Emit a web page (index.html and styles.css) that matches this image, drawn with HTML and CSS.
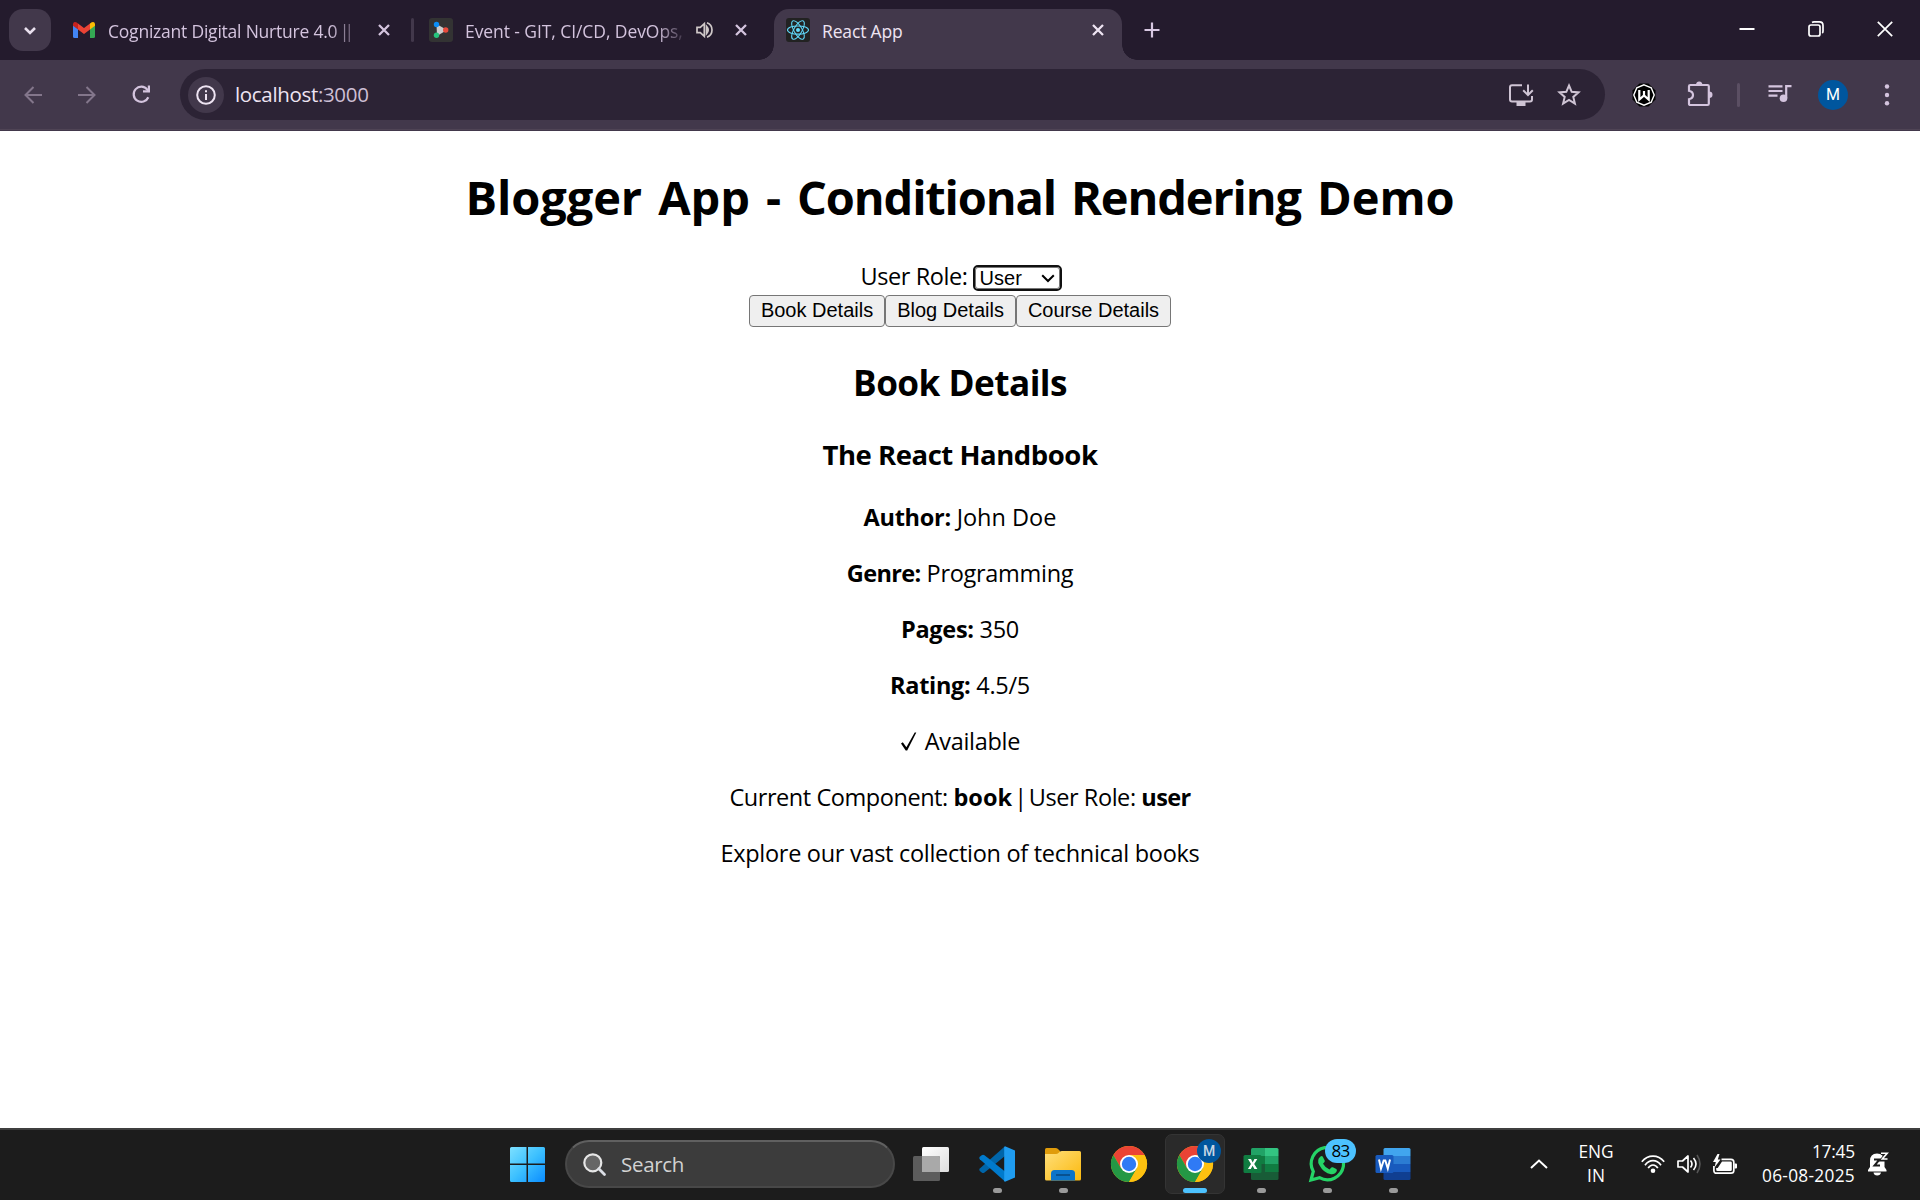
FILE: index.html
```html
<!DOCTYPE html>
<html lang="en">
<head>
<meta charset="utf-8">
<title>React App</title>
<link rel="stylesheet" href="styles.css">
</head>
<body>
<header class="tabstrip">
  <button class="tab-search" aria-label="Search tabs"><svg width="14" height="9" viewBox="0 0 14 9"><path d="M2 2l5 5 5-5" fill="none" stroke="#e9e0ee" stroke-width="2.6"/></svg></button>
  <div class="tab tab-mail">
    <svg class="fav-mail" width="22" height="16" viewBox="0 0 22 16"><path d="M0 2v12.500Q0 16 1.500 16H5V6z" fill="#4285f4"/><path d="M17 6v10h3.500Q22 16 22 14.500V2z" fill="#34a853"/><path d="M17 1.500V7.500L22 3.700V2Q21.500-1 18.700.3z" fill="#fbbc04"/><path d="M5 1.500v6l6 4.500 6-4.500v-6L11 6z" fill="#ea4335"/><path d="M0 2v1.700L5 7.500v-6L3.300.3Q.5-1 0 2z" fill="#c5221f"/></svg>
    <span class="tab-title fade">Cognizant Digital Nurture 4.0 <span class="bars">||</span></span>
    <svg class="close" width="14" height="14" viewBox="0 0 14 14"><path d="M2 2l10 10M12 2L2 12" stroke="#d4c4de" stroke-width="2.300"/></svg>
  </div>
  <i class="tab-sep"></i>
  <div class="tab tab-event">
    <svg width="24" height="24" viewBox="0 0 24 24"><rect width="24" height="24" rx="3" fill="#333"/><path d="M7.500 6L18 12 8 18z" fill="#ccc"/><circle cx="7.500" cy="6.500" r="2.700" fill="#0a8df5"/><circle cx="16.700" cy="12" r="2.700" fill="#e84a3c"/><circle cx="7.500" cy="17.300" r="2.700" fill="#25c37c"/></svg>
    <span class="tab-title fade">Event - GIT, CI/CD, DevOps,</span>
    <svg class="audio" width="18" height="18" viewBox="0 0 18 18"><path d="M1 6.300h3.300L8.300 2.600v12.800l-4-3.700H1z" fill="none" stroke="#cfc8c8" stroke-width="1.700"/><path d="M10.500 5.300q3.300 3.700 0 7.400zM11 1.800q5 1.900 5 7.200t-5 7.200" fill="none" stroke="#cfc8c8" stroke-width="1.700"/></svg>
    <svg class="close" width="14" height="14" viewBox="0 0 14 14"><path d="M2 2l10 10M12 2L2 12" stroke="#d4c4de" stroke-width="2.300"/></svg>
  </div>
  <div class="tab tab-active">
    <svg width="24" height="24" viewBox="0 0 24 24"><rect width="24" height="24" rx="3" fill="#222"/><g fill="none" stroke="#61dafb" stroke-width="1.050"><ellipse cx="12" cy="12" rx="10.500" ry="4.100"/><ellipse cx="12" cy="12" rx="10.500" ry="4.100" transform="rotate(60 12 12)"/><ellipse cx="12" cy="12" rx="10.500" ry="4.100" transform="rotate(120 12 12)"/></g><circle cx="12" cy="12" r="2" fill="#61dafb"/></svg>
    <span class="tab-title">React App</span>
    <svg class="close" width="14" height="14" viewBox="0 0 14 14"><path d="M2 2l10 10M12 2L2 12" stroke="#eee4f2" stroke-width="2.300"/></svg>
  </div>
  <svg class="new-tab" width="16" height="16" viewBox="0 0 16 16"><path d="M8 .5v15M.5 8h15" stroke="#d8c8e2" stroke-width="2.200"/></svg>
  <div class="win-controls">
    <svg width="16" height="16" viewBox="0 0 16 16"><path d="M.5 8h15" stroke="#fff" stroke-width="2"/></svg>
    <svg width="16" height="16" viewBox="0 0 16 16"><rect x="1" y="4" width="11" height="11" rx="2" fill="none" stroke="#fff" stroke-width="1.700"/><path d="M4 1.500Q5 .9 6 .9h5.500Q15 .9 15 4.500V10q0 1.500-.8 2" fill="none" stroke="#fff" stroke-width="1.700"/></svg>
    <svg width="16" height="16" viewBox="0 0 16 16"><path d="M.8.8l14.400 14.400M15.200.8L.8 15.200" stroke="#fff" stroke-width="1.700"/></svg>
  </div>
</header>
<nav class="toolbar">
  <svg class="back" width="18" height="18" viewBox="0 0 18 18"><path d="M18 9H1.500M9.500 1L1.500 9l8 8" fill="none" stroke="#83768b" stroke-width="2"/></svg>
  <svg class="fwd" width="18" height="18" viewBox="0 0 18 18"><path d="M0 9h16.500M8.500 1l8 8-8 8" fill="none" stroke="#83768b" stroke-width="2"/></svg>
  <svg class="reload" width="19" height="19" viewBox="0 0 19 19"><path d="M16.300 12.200A7.600 7.600 0 1 1 15.300 4.600L17 6.500" fill="none" stroke="#d4c4de" stroke-width="2.200"/><path d="M18 .5v7h-7V5.300h4.800V.5z" fill="#d4c4de"/></svg>
  <div class="omnibox">
    <span class="info"><svg width="20" height="20" viewBox="0 0 20 20"><circle cx="10" cy="10" r="8.800" fill="none" stroke="#eee4f2" stroke-width="2"/><path d="M10 9v6M10 5.200v2" stroke="#eee4f2" stroke-width="2"/></svg></span>
    <span class="url">localhost<span class="port">:3000</span></span>
    <svg class="install" width="24" height="22" viewBox="0 0 24 22"><path d="M13 1.200H3Q1 1.200 1 3.200v12.300q0 2 2 2h18q2 0 2-2V12" fill="none" stroke="#cfc4d4" stroke-width="2"/><path d="M7.500 17.500h9V22h-9z" fill="#cfc4d4"/><path d="M19 .5v10M14.200 6.300L19 11l4.800-4.700" fill="none" stroke="#cfc4d4" stroke-width="2"/></svg>
    <svg class="star" width="24" height="23" viewBox="0 0 24 23"><path d="M12 2.500l2.700 6.300 6.800.6-5.200 4.500 1.600 6.700-5.900-3.600-5.900 3.600 1.600-6.700-5.200-4.500 6.800-.6z" fill="none" stroke="#cfc4d4" stroke-width="2"/></svg>
  </div>
  <svg class="ext" width="24" height="24" viewBox="0 0 24 24"><path d="M7.500 .5h9L23.500 7.500v9L16.500 23.500h-9L.5 16.500v-9z" fill="#000"/><path d="M12 1.800l7.200 3 3 7.200-3 7.200-7.200 3-7.200-3-3-7.200 3-7.200z" fill="#000" stroke="#fff" stroke-width="1.400"/><path d="M7.300 7v9.500L12 12.500l4.700 4V7M12 8v5" fill="none" stroke="#fff" stroke-width="2.200"/></svg>
  <svg class="puzzle" width="26" height="26" viewBox="0 0 26 26"><path d="M3.300 4h17.200q1.300 0 1.300 1.300v17.400q0 1.300-1.300 1.300H3.300Q2 24 2 22.700v-4.500Q6 17.300 6 14t-4-4.200V5.300Q2 4 3.300 4z" fill="none" stroke="#d4c4de" stroke-width="2.200"/><path d="M9 4q0-3.500 3.200-3.500T15.400 4zM22 10.500q3.500 0 3.500 3.300T22 17.100z" fill="#d4c4de"/></svg>
  <i class="bar-sep"></i>
  <svg class="queue" width="24" height="18" viewBox="0 0 24 18"><path d="M.5 1.300h14M.5 6h14M.5 10.700h9" stroke="#d4c4de" stroke-width="2.200"/><circle cx="15.500" cy="13.200" r="3.800" fill="#d4c4de"/><path d="M18.200 13V1.200H23.500" fill="none" stroke="#d4c4de" stroke-width="2.200"/></svg>
  <span class="avatar">M</span>
  <svg class="menu" width="6" height="22" viewBox="0 0 6 22"><g fill="#d4c4de"><circle cx="3" cy="2.500" r="2.200"/><circle cx="3" cy="11" r="2.200"/><circle cx="3" cy="19.300" r="2.200"/></g></svg>
</nav>
<main class="app">
  <h1>Blogger App - <span class="h1-mid">Conditional Rendering</span> Demo</h1>
  <div class="role"><span class="role-label">User Role:</span><div class="select-box"><select><option>User</option><option>Admin</option></select><svg class="arrow" width="14" height="9" viewBox="0 0 14 9"><path d="M1.200 1.200L7 7l5.800-5.800" fill="none" stroke="#000" stroke-width="2"/></svg></div></div>
  <div class="switcher"><button>Book Details</button><button>Blog Details</button><button>Course Details</button></div>
  <h2>Book Details</h2>
  <h3>The React Handbook</h3>
  <p><strong>Author:</strong> <span class="loose">John Doe</span></p>
  <p><strong class="tight">Genre:</strong> Programming</p>
  <p><strong>Pages:</strong> 350</p>
  <p><strong>Rating:</strong> 4.5/5</p>
  <p><svg class="check" width="17" height="19" viewBox="0 0 17 19"><path d="M1 11.500l1.800-1.200 3.600 5L14.700.5h1.600L7.200 18.500H5.700z" fill="#000"/></svg> Available</p>
  <p class="status">Current Component: <strong class="loose">book</strong> <span class="pipe">|</span> User Role: <strong class="tight">user</strong></p>
  <p>Explore our vast collection of technical books</p>
</main>
<footer class="taskbar">
  <svg class="start" width="35" height="35" viewBox="0 0 35 35"><defs><linearGradient id="win" x1="0" y1="0" x2="35" y2="35" gradientUnits="userSpaceOnUse"><stop stop-color="#7de0ff"/><stop offset=".5" stop-color="#3cc0ff"/><stop offset="1" stop-color="#0a8cff"/></linearGradient></defs><path d="M1.500 0H16.500V16.500H0V1.500Q0 0 1.500 0zM18 0h15.500Q35 0 35 1.500v15H18zM0 18h16.500v17h-15Q0 35 0 33.500zM18 18h17v15.500q0 1.500-1.500 1.500H18z" fill="url(#win)"/></svg>
  <div class="search"><svg width="23" height="23" viewBox="0 0 23 23"><circle cx="9.800" cy="9.800" r="8.500" fill="#666" stroke="#e6e6e6" stroke-width="2.200"/><path d="M15.800 15.800l5.700 5.700" stroke="#dcdfe6" stroke-width="2.800" stroke-linecap="round"/></svg><span>Search</span></div>
  <div class="apps">
    <div class="slot"><svg width="36" height="36" viewBox="0 0 36 36"><defs><linearGradient id="tv" x1="0" y1="0" x2="1" y2="1"><stop stop-color="#fff"/><stop offset="1" stop-color="#ddd"/></linearGradient></defs><rect x="9" y="1" width="27" height="25" rx="1.500" fill="url(#tv)"/><rect y="10" width="27" height="25" rx="1.500" fill="#5c5c5c"/><path d="M9 10h16.500q1.500 0 1.500 1.500V26H9z" fill="#a9a9a9"/></svg></div>
    <div class="slot run"><svg width="36" height="36" viewBox="0 0 36 36"><path d="M.8 22.500L26 .3V10L5.500 26.500q-1.500 1-2.800 0L.8 25q-1.200-1.200 0-2.500z" fill="#0065a9"/><path d="M.8 13.200Q-.4 12 .8 10.700L2.700 9.200q1.300-1 2.800 0L26 25.500v10z" fill="#007acc"/><path d="M26 .3L36 4.500v27L26 35.800q-1.500-.3-.8-2.500V3q-.5-2.300.8-2.700z" fill="#1f9cf0"/></svg></div>
    <div class="slot run"><svg width="36" height="36" viewBox="0 0 36 36"><defs><linearGradient id="fo" x1="0" y1="0" x2="1" y2="1"><stop stop-color="#ffdf7a"/><stop offset="1" stop-color="#fbb90e"/></linearGradient></defs><path d="M0 3.500Q0 2 1.500 2h9q1.500 0 2.500 1l2 2v5H0z" fill="#e09c0b"/><path d="M0 8h11q1.500 0 2.500-1l1-1q1-1 2.500-1h17.500Q36 5 36 6.500V33q0 1.500-1.500 1.500h-33Q0 34.500 0 33z" fill="url(#fo)"/><path d="M6 34.500V27.500Q6 24 9.500 24h17Q30 24 30 27.500v7z" fill="#0c74c9"/><path d="M11 29h14" stroke="#084d8a" stroke-width="1.800"/></svg></div>
    <div class="slot"><svg width="36" height="36" viewBox="0 0 36 36"><g id="chrome"><circle cx="18" cy="18" r="18" fill="#fbbc04"/><path d="M18 9H33.590A18 18 0 0 0 2.410 9L10.200 22.500z" fill="#ea4335"/><path d="M2.410 9A18 18 0 0 0 18 36L25.800 22.500 18 18 10.200 22.500z" fill="#249845"/><path d="M18 9H33.590A18 18 0 0 1 18 36L25.800 22.500z" fill="#fdc110"/><circle cx="18" cy="18" r="9" fill="#fff"/><circle cx="18" cy="18" r="7.200" fill="#2f7af5"/></g></svg></div>
    <div class="slot current"><svg width="36" height="36" viewBox="0 0 36 36"><use href="#chrome"/></svg><span class="badge-m">M</span></div>
    <div class="slot run"><svg width="36" height="36" viewBox="0 0 36 36"><path d="M8 3.500Q8 2 9.500 2H22v8H8z" fill="#21a366"/><path d="M22 2h12Q35.500 2 35.500 3.500V10H22z" fill="#33c481"/><path d="M8 10h14v8H8z" fill="#107c41"/><path d="M22 10h13.500v8H22z" fill="#21a366"/><path d="M8 18h27.500v14.500q0 1.500-1.500 1.500H9.500Q8 34 8 32.500z" fill="#185c37"/><path d="M22 18h13.500v8H22z" fill="#107c41"/><rect x=".5" y="9" width="18" height="18" rx="1.500" fill="#107c41"/><path d="M5 13h3l1.700 3.400L11.400 13h2.900L11.200 18l3.200 5h-3l-1.800-3.300L7.800 23H4.900L8 18z" fill="#fff"/></svg></div>
    <div class="slot run"><svg width="36" height="36" viewBox="0 0 36 36"><path d="M2 34l2.300-8.500A16.200 16.200 0 1 1 10.500 31.700z" fill="none" stroke="#25d366" stroke-width="3.200"/><path d="M11.500 10.500q1-1 2.200 0l2 4q.3 1-.4 1.800l-1.300 1.500q2.300 4 6.500 5.800l1.800-2q.7-.7 1.500-.3l3.500 1.800q1 .7.4 2.200-1.700 3.400-5.700 3Q14.500 27 10.300 19q-3-5 1.200-8.500z" fill="#25d366"/></svg><span class="badge-n">83</span></div>
    <div class="slot run"><svg width="36" height="36" viewBox="0 0 36 36"><path d="M8.500 10V3.500Q8.500 2 10 2h24q1.500 0 1.500 1.500V10z" fill="#41a5ee"/><path d="M8.500 10h27v8h-27z" fill="#2b7cd3"/><path d="M8.500 18h27v8h-27z" fill="#185abd"/><path d="M8.500 26h27v6.500Q35.500 34 34 34H10q-1.500 0-1.500-1.500z" fill="#103f91"/><rect x=".5" y="9" width="18" height="18" rx="1.500" fill="#185abd"/><path d="M4 13.500l2 9 2.700-8h1.600l2.500 8 2.200-9" fill="none" stroke="#fff" stroke-width="2"/></svg></div>
  </div>
  <div class="tray">
    <svg class="chev" width="18" height="10" viewBox="0 0 18 10"><path d="M1 9l8-7.500L17 9" fill="none" stroke="#fff" stroke-width="2"/></svg>
    <div class="lang"><span>ENG</span><span>IN</span></div>
    <svg class="wifi" width="24" height="18" viewBox="0 0 24 18"><g fill="none" stroke="#fff" stroke-width="1.700"><path d="M.8 6.800Q5.500 1.200 12 1.200t11.200 5.600M4 10.200Q7.300 5.700 12 5.700t8 4.500M7.200 13.200Q9 10 12 10t4.800 3.200"/></g><circle cx="12" cy="15.700" r="2.300" fill="#fff"/></svg>
    <svg class="vol" width="24" height="20" viewBox="0 0 24 20"><path d="M1 7h4.500L11 2v16l-5.500-5H1z" fill="none" stroke="#fff" stroke-width="1.700" stroke-linejoin="round"/><path d="M13.500 6.500q3 3.500 0 7M16.500 4q5 6 0 12" fill="none" stroke="#fff" stroke-width="1.600"/><path d="M20 1q6 9 0 18" fill="none" stroke="#555" stroke-width="1.600"/></svg>
    <svg class="batt" width="24" height="21" viewBox="0 0 24 21"><path d="M8.500 5.300h9.500q2.800 0 2.800 2.700v8.500q0 2.700-2.800 2.700H3.700Q.9 19.200.9 16.500V12" fill="none" stroke="#fff" stroke-width="1.700"/><path d="M9 7.500h8.500q1.300 0 1.300 1.200v7q0 1.300-1.300 1.300h-13q-1.300 0-1.300-1.300V14h1.500zM21.500 9.500H23q1 0 1 1v3q0 1-1 1h-1.500zM4.500 0L0 8h2.800L1.500 13.500 7.500 5.500H4.800L6.500 0z" fill="#fff"/></svg>
    <div class="clock"><span class="time">17:45</span><span class="date">06-08-2025</span></div>
    <svg class="bell" width="22" height="24" viewBox="0 0 22 24"><path d="M1 19.500v-1.500l2-3V9q0-7.500 7-7.500T17.500 9v6l2 3v1.500zM6.500 20.500h7.500q-.5 3-3.800 3t-3.700-3z" fill="#fff"/><path d="M14 1h6.500l-5 6.500H21" fill="none" stroke="#1c1c1c" stroke-width="4"/><path d="M14 1.200h6.200l-5 5.800h5.300" fill="none" stroke="#fff" stroke-width="1.600"/><path d="M7 7.500h5.500L7.500 13.500h5.500" fill="none" stroke="#1c1c1c" stroke-width="2"/></svg>
  </div>
</footer>
</body>
</html>
```
FILE: styles.css
```css
* { box-sizing: border-box; }
body { margin: 0; width: 1920px; height: 1200px; overflow: hidden; display: flex; flex-direction: column; background: #fff; font-family: "Open Sans", "Noto Sans", sans-serif; }
svg { display: block; flex: none; overflow: visible; }
i { flex: none; }

.tabstrip { height: 60px; flex: none; display: flex; align-items: flex-start; background: #241b2d; color: #d4c4de; font-size: 17.500px; }
.tab-search { width: 42px; height: 42px; margin: 9px 12px 0 9px; padding: 0; border: 0; border-radius: 14px; background: #42384b; display: grid; place-items: center; }
.tab { display: flex; align-items: center; height: 42px; margin-top: 9px; }
.tab-title { white-space: nowrap; line-height: 26px; padding-top: 2px; letter-spacing: -.150px; }
.tab-mail { width: 348px; padding-left: 10px; }
.tab-mail .tab-title { width: 254px; margin: 0 15px 0 13px; letter-spacing: -.220px; }
.tab-mail .bars { letter-spacing: -4.800px; margin-left: -2px; }
.tab-sep { width: 3px; height: 24px; margin-top: 18px; background: #42384b; border-radius: 2px; }
.tab-event { width: 360px; padding-left: 15px; }
.tab-event .tab-title { width: 219px; margin: 0 12px; letter-spacing: -.080px; }
.tab-event .audio { margin-right: 20px; }
.fade { -webkit-mask-image: linear-gradient(90deg, #000 87%, transparent 102%); mask-image: linear-gradient(90deg, #000 87%, transparent 102%); }
.tab-active { width: 348px; height: 51px; padding: 0 17px 9px 12px; border-radius: 15px 15px 0 0; background: #42384b; color: #eee4f2; position: relative; }
.tab-active::before, .tab-active::after { content: ""; position: absolute; bottom: 0; width: 15px; height: 15px; }
.tab-active::before { left: -15px; background: radial-gradient(circle at 0 0, transparent 14.500px, #42384b 15px); }
.tab-active::after { right: -15px; background: radial-gradient(circle at 100% 0, transparent 14.500px, #42384b 15px); }
.tab-active .tab-title { flex: 1; margin-left: 12px; }
.new-tab { margin: 22px 0 0 22px; }
.win-controls { display: flex; gap: 53px; margin: 21px 27px 0 auto; }

.toolbar { height: 71px; flex: none; display: flex; align-items: center; padding: 9px 30px 11px 24px; background: linear-gradient(#4f4455, #4f4455) 0 69px / 100% 1px no-repeat, #42384b; }
.back { margin-right: 36px; }
.fwd { margin-right: 36px; }
.reload { margin-right: 29px; }
.omnibox { width: 1425px; height: 51px; border-radius: 26px; background: #2c2335; display: flex; align-items: center; padding: 0 24px 0 8px; }
.info { width: 36px; height: 36px; border-radius: 50%; background: #42384b; display: grid; place-items: center; }
.url { flex: 1; margin: -1px 0 0 11px; font-size: 20.500px; letter-spacing: -.330px; color: #eee4f2; line-height: 30px; }
.port { color: #cdbfd4; }
.install { margin-right: 24px; }
.ext { margin: 0 31px 0 27px; }
.puzzle { margin-top: -2px; }
.bar-sep { width: 3px; height: 24px; margin: 0 28px 0 24px; background: #5b4f63; border-radius: 2px; }
.queue { margin: -2px 26px 0 0; }
.avatar { width: 30px; height: 30px; margin-right: auto; border-radius: 50%; background: #00569e; color: #fff; font: 16px/30px Roboto, sans-serif; text-align: center; }

.app { flex: 1; min-height: 0; text-align: center; color: #000; font-size: 23.500px; letter-spacing: -.290px; line-height: 32px; padding-top: 34px; overflow: hidden; }
h1 { margin: 0 0 30px; font-size: 47px; line-height: 64px; letter-spacing: -.100px; word-spacing: 4px; }
.h1-mid { letter-spacing: -1.150px; }
.role { display: flex; justify-content: center; height: 36px; gap: 7px; }
.role-label { padding-top: 1px; letter-spacing: -.400px; }
.select-box { height: 22px; margin-top: 8px; position: relative; }
.select-box select { appearance: none; display: block; width: 85px; height: 22px; padding: 0 0 0 4px; border: 1px solid #767676; border-radius: 3px; outline: 2px solid #101010; background: #fff; font: 20px/20px "Liberation Sans", Arial, sans-serif; color: #000; }
.arrow { position: absolute; right: 5px; top: 7px; pointer-events: none; }
.switcher { display: flex; justify-content: center; height: 32px; }
.switcher button { height: 32px; padding: 0 11px 1px; border: 1.500px solid #767676; border-radius: 4px; background: #efefef; font: 20px "Liberation Sans", Arial, sans-serif; color: #000; }
h2 { margin: 31px 0 30px; font-size: 35.200px; line-height: 48px; letter-spacing: -.550px; }
h3 { margin: 30px 0 28px; font-size: 27.500px; line-height: 37px; letter-spacing: -.460px; }
p { margin: 0 0 24px; }
.loose { letter-spacing: 0; }
.tight { letter-spacing: -.600px; }
.status { letter-spacing: -.440px; }
.pipe { margin: 0 -3.500px; }
.check { display: inline-block; vertical-align: -1px; margin-right: 2px; }

.taskbar { height: 72px; flex: none; display: flex; align-items: center; background: #1c1c1c; border-top: 2px solid #3f3f3f; padding: 0 0 2px 510px; color: #fff; }
.search { width: 330px; height: 48px; margin-left: 20px; border-radius: 24px; border: 2px solid #484848; border-top-color: #606060; background: #3c3c3c; display: flex; align-items: center; gap: 15px; padding-left: 16px; font-size: 20.500px; letter-spacing: -.300px; color: #d2d2d2; }
.apps { display: flex; margin-left: 6px; }
.slot { width: 60px; height: 60px; margin-right: 6px; display: grid; place-items: center; position: relative; border-radius: 7px; }
.run::after, .current::after { content: ""; position: absolute; left: 25.500px; bottom: 1px; width: 9px; height: 5px; border-radius: 3px; background: #9a9a9a; }
.current { background: #2a2a2a; border: 1px solid #343434; }
.current::after { left: 17px; bottom: 0; width: 24px; background: #4cc2ff; }
.badge-m { position: absolute; left: 31px; top: 4px; width: 24px; height: 24px; border-radius: 50%; background: #00569e; color: #c5d5e4; font: 500 14px/24px Roboto, sans-serif; text-align: center; }
.badge-n { position: absolute; left: 28px; top: 5px; width: 31px; height: 24px; border-radius: 12px; background: #4cc2ff; color: #000; font-size: 17px; line-height: 24px; text-align: center; letter-spacing: -.700px; }
.tray { display: flex; align-items: center; margin-left: auto; padding-right: 31px; font-size: 17.300px; line-height: 24px; }
.lang { width: 42px; margin: 0 24px 0 27px; display: flex; flex-direction: column; align-items: center; }
.vol { margin: 0 12px; }
.clock { width: 100px; margin: 0 12px 0 18px; display: flex; flex-direction: column; align-items: flex-end; }
.time { letter-spacing: -.200px; }
.date { letter-spacing: .280px; }
```
